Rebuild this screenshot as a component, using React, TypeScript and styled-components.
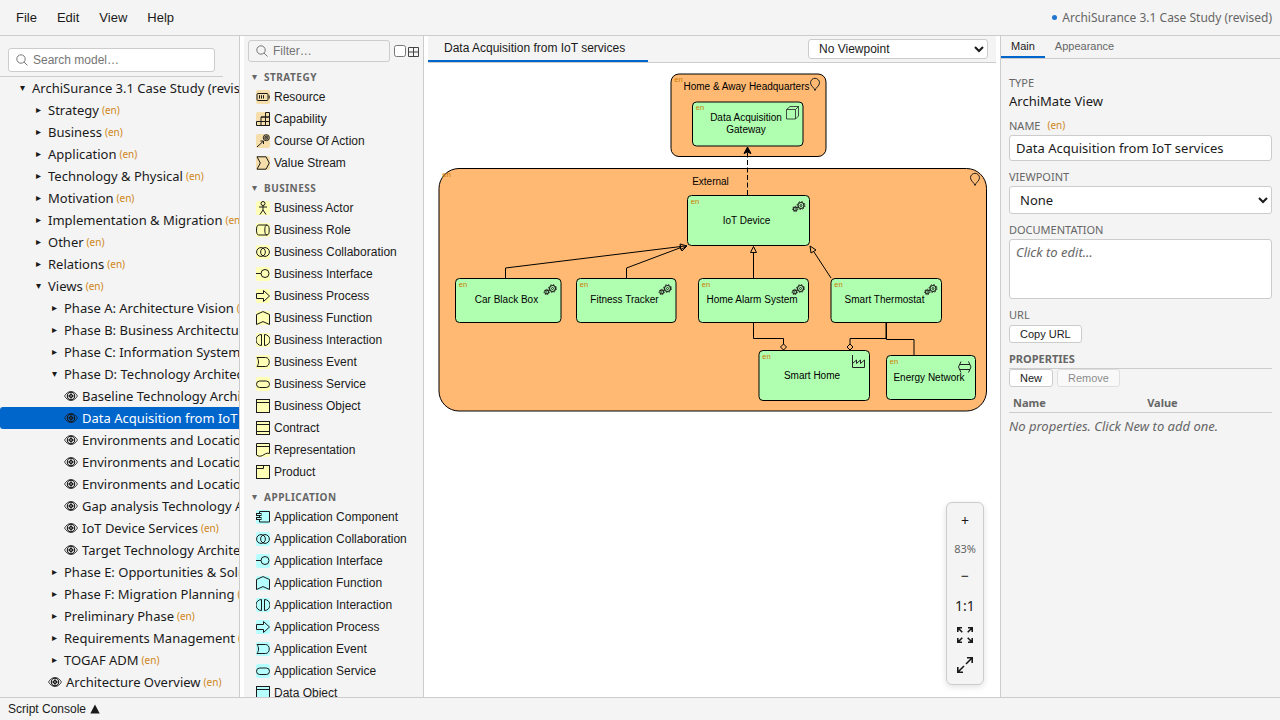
import React from "react";
import styled, { createGlobalStyle, css } from "styled-components";

const noto = `"Noto Sans", "DejaVu Sans", sans-serif`;
const arial = `"Liberation Sans", Arial, sans-serif`;
const border = "#cccccc";
const panel = "#f4f4f4";
const accent = "#0066cc";
const muted = "#666666";
const lang = "#cc7a00";

const GlobalStyle = createGlobalStyle`
  * { box-sizing: border-box; }
  html, body, #root { height: 100%; }
  body {
    margin: 0;
    overflow: hidden;
    background: #ffffff;
    color: #1a1a1a;
    font-family: ${noto};
    font-size: 13px;
    line-height: 18px;
  }
`;

const Shell = styled.div`
  display: flex;
  flex-direction: column;
  height: 100vh;
`;

const MenuBar = styled.header`
  display: flex;
  align-items: center;
  justify-content: space-between;
  height: 36px;
  padding: 0 8px;
  background: ${panel};
  border-bottom: 1px solid ${border};
`;

const MenuList = styled.nav`
  display: flex;
  gap: 4px;
`;

const MenuButton = styled.button`
  padding: 4px 8px;
  border: 0;
  background: none;
  color: inherit;
  font: 13px/16px ${arial};
`;

const DocumentTitle = styled.div`
  display: flex;
  align-items: center;
  gap: 5px;
  color: ${muted};
  font-size: 12px;
`;

const DirtyDot = styled.span`
  width: 5px;
  height: 5px;
  border-radius: 50%;
  background: #1f75d1;
`;

const Workspace = styled.div`
  display: flex;
  flex: 1;
  min-height: 0;
  gap: 4px;
`;

const ModelPanel = styled.aside`
  display: flex;
  flex-direction: column;
  flex: 0 0 240px;
  overflow: hidden;
  background: ${panel};
  border-right: 1px solid ${border};
`;

const SearchArea = styled.div`
  flex: none;
  margin-right: 16px;
  padding: 12px 8px 4px;
  border-bottom: 1px solid ${border};
`;

const SearchBox = styled.label<{ $plain?: boolean }>`
  display: flex;
  flex: 1;
  align-items: center;
  gap: 5px;
  min-width: 0;
  height: ${(p) => (p.$plain ? 22 : 24)}px;
  padding: 0 7px;
  border: 1px solid ${border};
  border-radius: 3px;
  background: ${(p) => (p.$plain ? "transparent" : "#ffffff")};
  color: #777777;
  svg { flex: none; }
`;

const SearchInput = styled.input`
  flex: 1;
  min-width: 0;
  padding: 0;
  border: 0;
  outline: 0;
  background: transparent;
  font: 12px/16px ${arial};
  &::placeholder { color: #757575; }
`;

const Tree = styled.ul`
  width: max-content;
  min-width: 100%;
  margin: 0;
  padding: 0;
  list-style: none;
`;

const TreeRow = styled.li<{ $level: number; $selected?: boolean }>`
  display: flex;
  align-items: center;
  height: 22px;
  padding-left: ${(p) => 16 + p.$level * 16}px;
  border-radius: 3px;
  white-space: nowrap;
  ${(p) => p.$selected && css`
    background: ${accent};
    color: #ffffff;
  `}
`;

const Toggle = styled.span`
  width: 16px;
  padding-left: 4px;
  font: 10px/18px "DejaVu Sans", sans-serif;
`;

const Eye = styled.span`
  display: flex;
  width: 18px;
  color: #1a1a1a;
`;

const Lang = styled.span`
  margin-left: 3px;
  color: ${lang};
  font-size: 10px;
  opacity: 0.9;
`;

const Palette = styled.aside`
  flex: 0 0 180px;
  overflow: hidden;
  background: ${panel};
  border-right: 1px solid ${border};
`;

const PaletteBar = styled.div`
  display: flex;
  align-items: center;
  gap: 4px;
  padding: 4px 4px 1px;
`;

const GridToggle = styled.label`
  display: flex;
  align-items: center;
  gap: 2px;
  color: #444444;
`;

const CheckBox = styled.input`
  width: 12px;
  height: 12px;
  margin: 0;
`;

const GroupTitle = styled.h2`
  display: flex;
  align-items: center;
  height: 23px;
  margin: 0;
  padding: 5px 0 0 8px;
  color: ${muted};
  font: bold 10px/18px ${noto};
  letter-spacing: 0.5px;
  text-transform: uppercase;
`;

const GroupArrow = styled.span`
  width: 12px;
  font: 10px/18px "DejaVu Sans", sans-serif;
`;

const PaletteItem = styled.button`
  display: flex;
  align-items: center;
  gap: 4px;
  width: 100%;
  height: 22px;
  padding: 0 12px;
  border: 0;
  background: none;
  color: inherit;
  font: 12px/16px ${arial};
  white-space: nowrap;
`;

const Editor = styled.main`
  display: flex;
  flex: 1;
  flex-direction: column;
  min-width: 0;
`;

const EditorTabs = styled.div`
  display: flex;
  flex: none;
  align-items: center;
  justify-content: space-between;
  height: 27px;
  padding-right: 8px;
  background: ${panel};
  border-bottom: 1px solid ${border};
`;

const EditorTab = styled.button`
  align-self: stretch;
  min-width: 220px;
  padding: 0 16px;
  border: 0;
  border-bottom: 2px solid ${accent};
  background: none;
  color: inherit;
  font: 12px/16px ${arial};
  text-align: left;
`;

const Select = styled.select<{ $wide?: boolean }>`
  width: ${(p) => (p.$wide ? "100%" : "180px")};
  height: ${(p) => (p.$wide ? 28 : 20)}px;
  padding: 0 6px;
  border: 1px solid ${border};
  border-radius: 3px;
  background: #ffffff;
  color: inherit;
  font-family: ${(p) => (p.$wide ? noto : arial)};
  font-size: ${(p) => (p.$wide ? 13 : 12)}px;
`;

const Canvas = styled.div`
  position: relative;
  flex: 1;
  min-height: 0;
  overflow: hidden;
  background: #ffffff;
`;

const Diagram = styled.svg`
  display: block;
  width: 100%;
  height: 100%;
  font-family: ${arial};
`;

const ZoomPanel = styled.div`
  position: absolute;
  right: 12px;
  bottom: 12px;
  display: flex;
  flex-direction: column;
  gap: 2px;
  width: 38px;
  padding: 4px;
  border: 1px solid ${border};
  border-radius: 6px;
  background: ${panel};
  box-shadow: 0 2px 6px rgba(0, 0, 0, 0.12);
`;

const ZoomButton = styled.button`
  display: flex;
  align-items: center;
  justify-content: center;
  height: 28px;
  padding: 0;
  border: 0;
  background: none;
  color: inherit;
  font: 14px/18px ${noto};
`;

const ZoomLevel = styled.span`
  color: ${muted};
  font-size: 11px;
  line-height: 23px;
  text-align: center;
`;

const Properties = styled.aside`
  flex: 0 0 280px;
  background: ${panel};
  border-left: 1px solid ${border};
`;

const PropertyTabs = styled.div`
  display: flex;
  height: 23px;
  border-bottom: 1px solid ${border};
`;

const PropertyTab = styled.button<{ $active?: boolean }>`
  padding: 0 10px;
  border: 0;
  border-bottom: 2px solid ${(p) => (p.$active ? accent : "transparent")};
  background: none;
  color: ${(p) => (p.$active ? "#1a1a1a" : muted)};
  font: 11px/16px ${arial};
`;

const PropertyBody = styled.div`
  padding: 16px 8px;
`;

const Field = styled.div<{ $gap?: number }>`
  display: flex;
  flex-direction: column;
  align-items: flex-start;
  gap: ${(p) => p.$gap ?? 2}px;
  margin-bottom: 8px;
`;

const FieldLabel = styled.label`
  display: flex;
  align-items: center;
  gap: 7px;
  color: ${muted};
  font-size: 11px;
  line-height: 15px;
`;

const FieldLang = styled.span`
  color: ${lang};
  font-size: 10px;
  opacity: 0.9;
`;

const TextInput = styled.input`
  width: 100%;
  height: 26px;
  padding: 3px 6px;
  border: 1px solid ${border};
  border-radius: 3px;
  background: #ffffff;
  color: inherit;
  font: 13px/18px ${noto};
`;

const TextArea = styled.textarea`
  display: block;
  width: 100%;
  height: 60px;
  padding: 3px 6px;
  border: 1px solid ${border};
  border-radius: 3px;
  background: #ffffff;
  font: 13px/18px ${noto};
  resize: none;
  &::placeholder { color: ${muted}; font-style: italic; }
`;

const SmallButton = styled.button`
  height: 18px;
  padding: 0 10px;
  border: 1px solid ${border};
  border-radius: 3px;
  background: #ffffff;
  color: #1a1a1a;
  font: 11px/14px ${arial};
  &:disabled { opacity: 0.5; }
`;

const SectionTitle = styled.h3`
  margin: 0;
  padding-bottom: 2px;
  border-bottom: 1px solid ${border};
  color: ${muted};
  font: bold 11px/15px ${noto};
`;

const ButtonRow = styled.div`
  display: flex;
  gap: 4px;
`;

const PropertyTable = styled.table`
  width: 100%;
  margin-top: 8px;
  border-collapse: collapse;
  table-layout: fixed;
`;

const HeaderCell = styled.th<{ $width: string }>`
  width: ${(p) => p.$width};
  padding: 0 4px 2px;
  border-bottom: 1px solid ${border};
  color: ${muted};
  font-size: 11px;
  line-height: 15px;
  text-align: left;
`;

const EmptyCell = styled.td`
  padding: 4px 0;
  color: ${muted};
  font-style: italic;
`;

const StatusBar = styled.footer`
  flex: none;
  height: 23px;
  background: ${panel};
  border-top: 1px solid ${border};
`;

const ConsoleButton = styled.button`
  display: flex;
  align-items: center;
  gap: 4px;
  height: 22px;
  padding: 0 8px;
  border: 0;
  background: none;
  color: inherit;
  font: 12px/16px ${arial};
`;

const ConsoleArrow = styled.svg`
  display: block;
`;

type Kind = "open" | "closed" | "view";
type Node = { level: number; label: string; kind: Kind; selected?: boolean; noLang?: boolean };

const tree: Node[] = [
  { level: 0, label: "ArchiSurance 3.1 Case Study (revised)", kind: "open", noLang: true },
  { level: 1, label: "Strategy", kind: "closed" },
  { level: 1, label: "Business", kind: "closed" },
  { level: 1, label: "Application", kind: "closed" },
  { level: 1, label: "Technology & Physical", kind: "closed" },
  { level: 1, label: "Motivation", kind: "closed" },
  { level: 1, label: "Implementation & Migration", kind: "closed" },
  { level: 1, label: "Other", kind: "closed" },
  { level: 1, label: "Relations", kind: "closed" },
  { level: 1, label: "Views", kind: "open" },
  { level: 2, label: "Phase A: Architecture Vision", kind: "closed" },
  { level: 2, label: "Phase B: Business Architecture", kind: "closed" },
  { level: 2, label: "Phase C: Information Systems Architecture", kind: "closed" },
  { level: 2, label: "Phase D: Technology Architecture", kind: "open" },
  { level: 3, label: "Baseline Technology Architecture", kind: "view" },
  { level: 3, label: "Data Acquisition from IoT services", kind: "view", selected: true },
  { level: 3, label: "Environments and Locations", kind: "view" },
  { level: 3, label: "Environments and Locations", kind: "view" },
  { level: 3, label: "Environments and Locations", kind: "view" },
  { level: 3, label: "Gap analysis Technology Architecture", kind: "view" },
  { level: 3, label: "IoT Device Services", kind: "view" },
  { level: 3, label: "Target Technology Architecture", kind: "view" },
  { level: 2, label: "Phase E: Opportunities & Solutions", kind: "closed" },
  { level: 2, label: "Phase F: Migration Planning", kind: "closed" },
  { level: 2, label: "Preliminary Phase", kind: "closed" },
  { level: 2, label: "Requirements Management", kind: "closed" },
  { level: 2, label: "TOGAF ADM", kind: "closed" },
  { level: 2, label: "Architecture Overview", kind: "view" },
];

const shapes: Record<string, React.ReactNode> = {
  resource: <><rect x="1" y="3.5" width="11" height="7" rx="1" /><path d="M13.2 5.5v3M3.5 5.2v3.4M5.5 5.2v3.4M7.5 5.2v3.4" /></>,
  capability: <path d="M.5 9.5h13v4H.5zM5 13.5v-8.500h8.500v8.500M9.500 13.500V.5h4v13M5 5h8.500" />,
  course: <><path d="M1 13L7 7.500M4.500 7h3v3" /><circle cx="10.300" cy="3.700" r="3" /><circle cx="10.300" cy="3.700" r="1.600" /><circle cx="10.300" cy="3.700" r=".5" /></>,
  stream: <path d="M1 .8h9l3.300 6.200L10 13.200H1L4.300 7z" />,
  actor: <><circle cx="7" cy="2.500" r="2" /><path d="M7 4.500v4.500M3 6h8M7 9l-3 4.500M7 9l3 4.500" /></>,
  role: <><path d="M11 2H2.500C1.200 2 .5 4.200 .5 7s.7 5 2 5H11" /><ellipse cx="11" cy="7" rx="2.200" ry="5" /></>,
  collaboration: <><circle cx="5" cy="7" r="4.400" /><circle cx="9" cy="7" r="4.400" /></>,
  interface: <><circle cx="9" cy="6.500" r="4" /><path d="M0 6.500h5" /></>,
  process: <path d="M.5 4.500h7V1.500l6 5.500-6 5.500v-3h-7z" />,
  function: <path d="M.5 3.500L7 .6l6.500 2.900v10L7 10.600.5 13.500z" />,
  interaction: <path d="M5.500 1.500a5.500 5.500 0 0 0 0 11zM8.500 1.500a5.500 5.500 0 0 1 0 11z" />,
  event: <path d="M1 2.500h8.500c5 0 5 9 0 9H1c2-2.500 2-6.500 0-9z" />,
  service: <rect x=".5" y="4" width="13" height="6.500" rx="3.250" />,
  object: <><rect x=".5" y=".5" width="13" height="13" /><path d="M.5 3.500h13" /></>,
  contract: <><rect x=".5" y=".5" width="13" height="13" /><path d="M.5 3.500h13M.5 10.500h13" /></>,
  representation: <path d="M.5 12V.5h13v10c-3-1.200-5 1-7 2s-4 1-6-.5zM.5 3.500h13" />,
  product: <><rect x=".5" y=".5" width="13" height="13" /><path d="M.5 3.500H7.500v-3" /></>,
  component: <><path d="M3.500 3.500V1.500h10v10.500h-10v-2M3.500 6v1.500" /><rect x=".5" y="3.500" width="4.500" height="2" /><rect x=".5" y="7.500" width="4.500" height="2" /></>,
};

const groups: { title: string; color: string; items: [string, string][] }[] = [
  {
    title: "Strategy",
    color: "#f5deaa",
    items: [["resource", "Resource"], ["capability", "Capability"], ["course", "Course Of Action"], ["stream", "Value Stream"]],
  },
  {
    title: "Business",
    color: "#ffffb5",
    items: [
      ["actor", "Business Actor"], ["role", "Business Role"], ["collaboration", "Business Collaboration"],
      ["interface", "Business Interface"], ["process", "Business Process"], ["function", "Business Function"],
      ["interaction", "Business Interaction"], ["event", "Business Event"], ["service", "Business Service"],
      ["object", "Business Object"], ["contract", "Contract"], ["representation", "Representation"], ["product", "Product"],
    ],
  },
  {
    title: "Application",
    color: "#b5ffff",
    items: [
      ["component", "Application Component"], ["collaboration", "Application Collaboration"],
      ["interface", "Application Interface"], ["function", "Application Function"],
      ["interaction", "Application Interaction"], ["process", "Application Process"],
      ["event", "Application Event"], ["service", "Application Service"], ["object", "Data Object"],
    ],
  },
];

const SearchIcon = () => (
  <svg width="12" height="12" viewBox="0 0 12 12" fill="none" stroke="currentColor" aria-hidden="true">
    <circle cx="5" cy="5" r="4.200" />
    <path d="M8 8l3.500 3.500" />
  </svg>
);

const EyeIcon = () => (
  <svg width="14" height="12" viewBox="0 0 14 12" fill="none" stroke="currentColor" aria-hidden="true">
    <path d="M.5 6C2.500 2.800 4.500 1.500 7 1.500S11.500 2.800 13.500 6C11.500 9.200 9.500 10.500 7 10.500S2.500 9.200 .5 6z" strokeWidth=".8" />
    <circle cx="7" cy="6" r="3.700" strokeWidth="1.100" />
    <circle cx="7" cy="6" r="1.700" strokeWidth="1" />
    <path d="M7 2v8M3 6h8" strokeWidth=".8" />
  </svg>
);

const ElementIcon = ({ shape, color }: { shape: string; color: string }) => (
  <svg width="14" height="14" viewBox="0 0 14 14" aria-hidden="true">
    <rect width="14" height="14" rx="2" fill={color} />
    <g fill="none" stroke="#1a1a1a">{shapes[shape]}</g>
  </svg>
);

const Gears = ({ x, y }: { x: number; y: number }) => (
  <g transform={`translate(${x} ${y})`} fill="none" stroke="#222222">
    <circle cx="8.500" cy="4" r="3" strokeWidth="1.200" />
    <circle cx="8.500" cy="4" r="3.900" strokeWidth="1" strokeDasharray="1.530 1.530" />
    <circle cx="8.500" cy="4" r="1" strokeWidth=".9" />
    <circle cx="2.700" cy="7.500" r="1.900" strokeWidth="1.100" />
    <circle cx="2.700" cy="7.500" r="2.700" strokeWidth=".9" strokeDasharray="1.210 1.210" />
    <circle cx="2.700" cy="7.500" r=".5" strokeWidth=".6" />
  </g>
);

const Pin = ({ x, y }: { x: number; y: number }) => (
  <path
    transform={`translate(${x} ${y})`}
    d="M5 12.500C4.300 9.500 .5 8 .5 4.800a4.500 4.500 0 0 1 9 0C9.500 8 5.700 9.500 5 12.500z"
    fill="none"
    stroke="#222222"
  />
);

type BoxProps = {
  x: number; y: number; w: number; h: number; r?: number; fill?: string;
  lines: string[]; tx: number; ty: number;
};

const Box = ({ x, y, w, h, r = 4, fill = "#b0ffb0", lines, tx, ty }: BoxProps) => (
  <g>
    <rect x={x} y={y} width={w} height={h} rx={r} fill={fill} stroke="#000000" />
    <text x={x + 3.300} y={y + 8.300} fontSize="7.500" fill={lang}>en</text>
    {lines.map((line, i) => (
      <text key={line} x={tx} y={ty + i * 12} fontSize="10" textAnchor="middle" fill="#000000">{line}</text>
    ))}
  </g>
);

const orange = "#ffb973";

export default function App() {
  return (
    <Shell>
      <GlobalStyle />
      <MenuBar>
        <MenuList>
          {["File", "Edit", "View", "Help"].map((m) => <MenuButton key={m}>{m}</MenuButton>)}
        </MenuList>
        <DocumentTitle><DirtyDot />ArchiSurance 3.1 Case Study (revised)</DocumentTitle>
      </MenuBar>

      <Workspace>
        <ModelPanel>
          <SearchArea>
            <SearchBox><SearchIcon /><SearchInput placeholder="Search model…" aria-label="Search model" /></SearchBox>
          </SearchArea>
          <Tree>
            {tree.map((n, i) => (
              <TreeRow key={i} $level={n.level} $selected={n.selected}>
                {n.kind === "view" ? <Eye><EyeIcon /></Eye> : <Toggle>{n.kind === "open" ? "▾" : "▸"}</Toggle>}
                {n.label}
                {!n.noLang && <Lang>(en)</Lang>}
              </TreeRow>
            ))}
          </Tree>
        </ModelPanel>

        <Palette>
          <PaletteBar>
            <SearchBox $plain><SearchIcon /><SearchInput placeholder="Filter…" aria-label="Filter" /></SearchBox>
            <GridToggle>
              <CheckBox type="checkbox" aria-label="Grid" />
              <svg width="11" height="11" viewBox="0 0 11 11" fill="none" stroke="currentColor" aria-hidden="true">
                <path d="M.5 1.500h10v9H.5zM5.500 1.500v9M.5 6h10" />
              </svg>
            </GridToggle>
          </PaletteBar>
          {groups.map((g) => (
            <section key={g.title}>
              <GroupTitle><GroupArrow>▾</GroupArrow>{g.title}</GroupTitle>
              {g.items.map(([shape, label]) => (
                <PaletteItem key={label}><ElementIcon shape={shape} color={g.color} />{label}</PaletteItem>
              ))}
            </section>
          ))}
        </Palette>

        <Editor>
          <EditorTabs>
            <EditorTab>Data Acquisition from IoT services</EditorTab>
            <Select aria-label="Diagram viewpoint"><option>No Viewpoint</option></Select>
          </EditorTabs>
          <Canvas>
            <Diagram>
              <Box x={243} y={11} w={155} h={82.5} r={8} fill={orange} lines={["Home & Away Headquarters"]} tx={318.500} ty={27} />
              <Pin x={382} y={15} />
              <Box x={264.500} y={39} w={110.500} h={44} lines={["Data Acquisition", "Gateway"]} tx={318} ty={58} />
              <path d="M358.500 46.500h9v9.500h-9zM358.500 46.500l3.500-3h8.500l-3 3M370.500 43.500v9.500l-3 3" fill="none" stroke="#222222" strokeWidth=".8" strokeLinejoin="round" />
              <Box x={11} y={105.500} w={547.500} h={242.500} r={20} fill={orange} lines={["External"]} tx={282.500} ty={122} />
              <Pin x={542} y={110} />
              <Box x={259.500} y={132.500} w={122} h={50} lines={["IoT Device"]} tx={318.500} ty={161} />
              <Gears x={364.500} y={138.500} />
              <Box x={27.500} y={215.500} w={105.500} h={44} lines={["Car Black Box"]} tx={78.500} ty={240} />
              <Gears x={116} y={221.500} />
              <Box x={148.500} y={215.500} w={99.500} h={44} lines={["Fitness Tracker"]} tx={196.500} ty={240} />
              <Gears x={231} y={221.500} />
              <Box x={270.500} y={215.500} w={110} h={44} lines={["Home Alarm System"]} tx={324} ty={240} />
              <Gears x={364} y={221.500} />
              <Box x={403} y={215.500} w={110.500} h={44} lines={["Smart Thermostat"]} tx={456.500} ty={240} />
              <Gears x={496.500} y={221.500} />
              <Box x={331} y={287.500} w={110.500} h={50} lines={["Smart Home"]} tx={384} ty={316} />
              <path d="M424.500 292v12.500h12V297l-4 3.500V297l-4 3.500V297l-4 3.500" fill="none" stroke="#222222" />
              <Box x={458.500} y={292.500} w={89} h={44} lines={["Energy Network"]} tx={501} ty={318} />
              <path d="M531.500 301.500h10.500M531.500 306.500h10.500M533 298.500l-2.500 5.500 2.500 5.500M540.500 298.500l2.500 5.500-2.500 5.500" fill="none" stroke="#222222" />

              <g fill="none" stroke="#000000">
                <path d="M319.500 132V84" strokeDasharray="5 2.500" />
                <path d="M319.500 84l-3.500 6.500 3.500-1.500 3.500 1.500z" fill="#000000" />
                <path d="M77.500 215v-10L253 183.500M198.500 215v-10L253 184.500" />
                <path d="M259 183l-7-2 1 5.500zM259 183l-7.500.5 2.500 4.500z" />
                <path d="M325.500 215v-25.500M325.500 183.500l-3 6h6z" />
                <path d="M403 215l-17-26M382 183l1 7 5-3z" />
                <path d="M325.500 260v15.500h30v5.500M355.500 281l3 3-3 3-3-3z" />
                <path d="M458 260v15.500h-36v5.500M422 281l3 3-3 3-3-3z" />
                <path d="M458.500 260v16.500H486V292" />
              </g>
            </Diagram>
            <ZoomPanel>
              <ZoomButton aria-label="Zoom in">+</ZoomButton>
              <ZoomLevel>83%</ZoomLevel>
              <ZoomButton aria-label="Zoom out">−</ZoomButton>
              <ZoomButton>1:1</ZoomButton>
              <ZoomButton aria-label="Fit to window">
                <svg width="16" height="18" viewBox="0 1 16 18" fill="none" stroke="currentColor" strokeWidth="1.600">
                  <path d="M.8 6V1.800H5M.8 1.800l4.500 4.500M11 1.800h4.200V6M15.200 1.800l-4.500 4.500M.8 12v4.200H5M.8 16.200l4.500-4.500M15.200 12v4.200H11M15.200 16.200l-4.500-4.500" />
                </svg>
              </ZoomButton>
              <ZoomButton aria-label="Full screen">
                <svg width="16" height="18" viewBox="0 1 16 18" fill="none" stroke="currentColor" strokeWidth="1.600">
                  <path d="M10 1.800h5.200V7M15.200 1.800L9 8M.8 11v5.200H6M.8 16.200L7 10" />
                </svg>
              </ZoomButton>
            </ZoomPanel>
          </Canvas>
        </Editor>

        <Properties>
          <PropertyTabs>
            <PropertyTab $active>Main</PropertyTab>
            <PropertyTab>Appearance</PropertyTab>
          </PropertyTabs>
          <PropertyBody>
            <Field><FieldLabel as="span">TYPE</FieldLabel><span>ArchiMate View</span></Field>
            <Field>
              <FieldLabel htmlFor="name">NAME <FieldLang>(en)</FieldLang></FieldLabel>
              <TextInput id="name" defaultValue="Data Acquisition from IoT services" />
            </Field>
            <Field>
              <FieldLabel htmlFor="viewpoint">VIEWPOINT</FieldLabel>
              <Select id="viewpoint" $wide><option>None</option></Select>
            </Field>
            <Field>
              <FieldLabel htmlFor="documentation">DOCUMENTATION</FieldLabel>
              <TextArea id="documentation" placeholder="Click to edit…" />
            </Field>
            <Field $gap={3}><FieldLabel as="span">URL</FieldLabel><SmallButton>Copy URL</SmallButton></Field>
            <SectionTitle>PROPERTIES</SectionTitle>
            <ButtonRow><SmallButton>New</SmallButton><SmallButton disabled>Remove</SmallButton></ButtonRow>
            <PropertyTable>
              <thead><tr><HeaderCell $width="51%">Name</HeaderCell><HeaderCell $width="49%">Value</HeaderCell></tr></thead>
              <tbody><tr><EmptyCell colSpan={2}>No properties. Click New to add one.</EmptyCell></tr></tbody>
            </PropertyTable>
          </PropertyBody>
        </Properties>
      </Workspace>

      <StatusBar>
        <ConsoleButton>
          Script Console
          <ConsoleArrow width="10" height="10" viewBox="0 0 10 10" aria-hidden="true">
            <path d="M5 .5L9.700 9.500H.3z" fill="currentColor" />
          </ConsoleArrow>
        </ConsoleButton>
      </StatusBar>
    </Shell>
  );
}
